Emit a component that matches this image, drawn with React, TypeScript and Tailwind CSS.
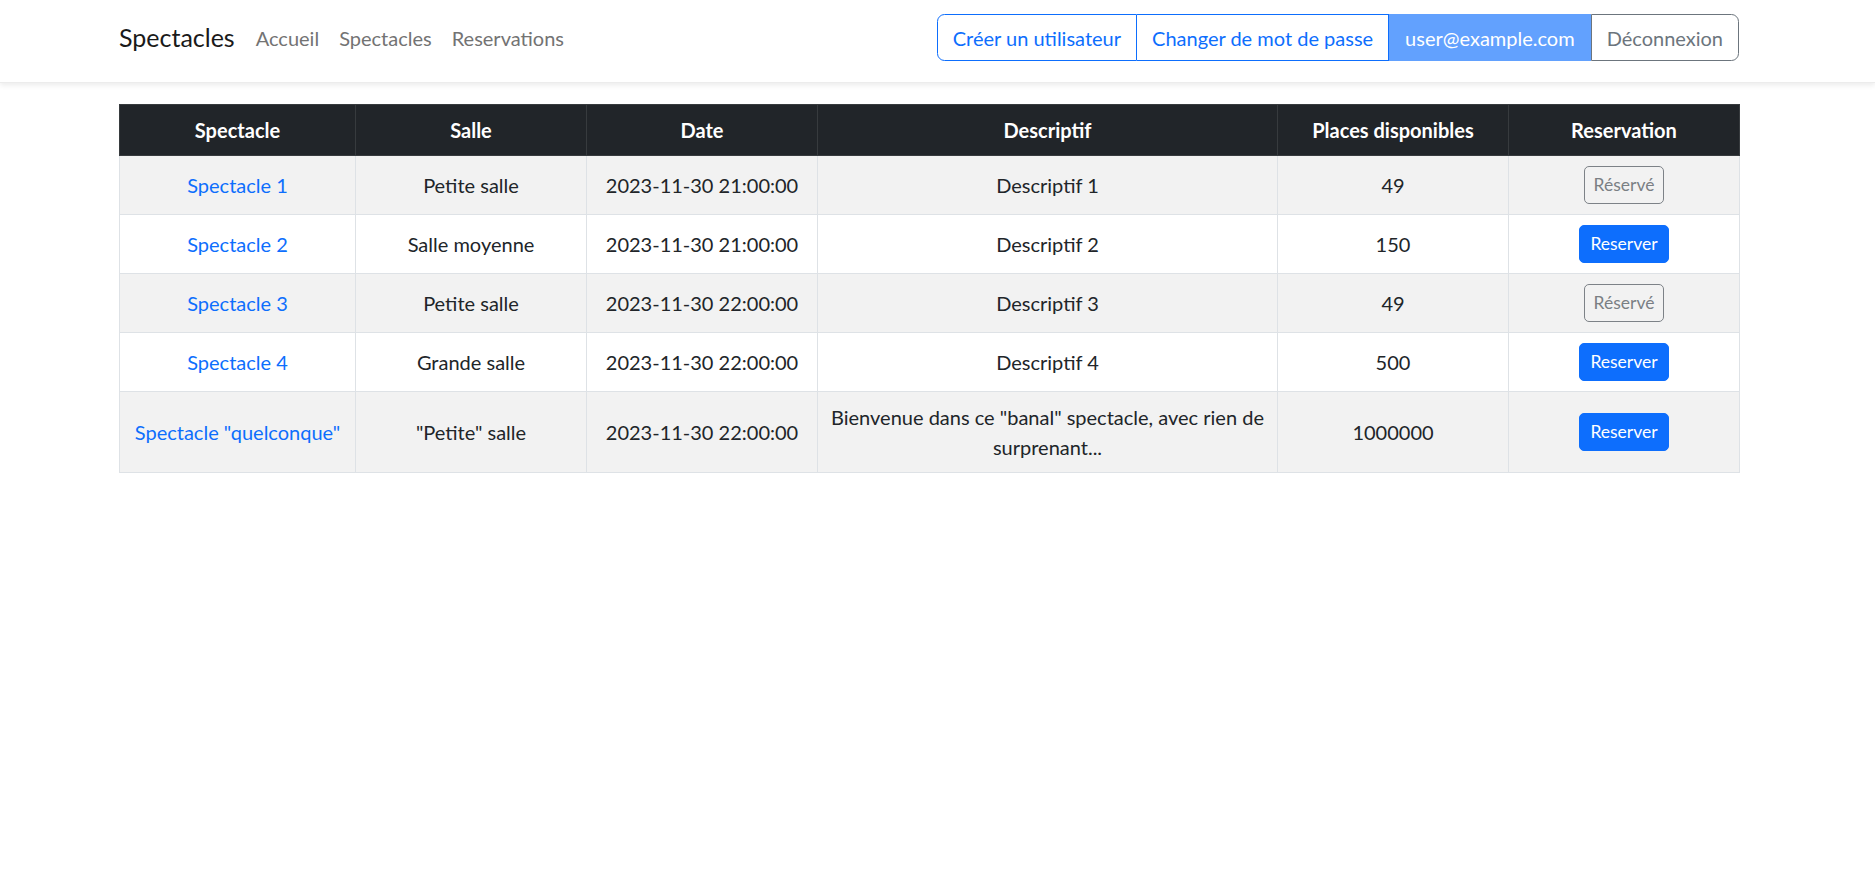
import React from "react";

const font = { fontFamily: 'Lato, "Open Sans", Arial, sans-serif' };

type Row = {
  name: string;
  salle: string;
  date: string;
  desc: React.ReactNode;
  places: string;
  reserved: boolean;
};

const rows: Row[] = [
  { name: "Spectacle 1", salle: "Petite salle", date: "2023-11-30 21:00:00", desc: "Descriptif 1", places: "49", reserved: true },
  { name: "Spectacle 2", salle: "Salle moyenne", date: "2023-11-30 21:00:00", desc: "Descriptif 2", places: "150", reserved: false },
  { name: "Spectacle 3", salle: "Petite salle", date: "2023-11-30 22:00:00", desc: "Descriptif 3", places: "49", reserved: true },
  { name: "Spectacle 4", salle: "Grande salle", date: "2023-11-30 22:00:00", desc: "Descriptif 4", places: "500", reserved: false },
  {
    name: 'Spectacle "quelconque"',
    salle: '"Petite" salle',
    date: "2023-11-30 22:00:00",
    desc: (
      <>
        <span className="whitespace-nowrap">Bienvenue dans ce "banal" spectacle, avec rien de</span>
        <br />
        surprenant...
      </>
    ),
    places: "1000000",
    reserved: false,
  },
];

export default function App() {
  return (
    <div className="min-h-[892px] bg-white text-[#212529]" style={font}>
      <nav className="h-[83px] bg-white shadow-[0_2.5px_5px_rgba(0,0,0,0.075)] border-b border-[#ececec]">
        <div className="ml-[119px] w-[1620px] flex items-center justify-between pt-[14px]">
          <div className="flex items-center h-[47px]">
            <span className="text-[25px] leading-[37px] text-[#1a1a1a] mr-[11px]">Spectacles</span>
            <span className="text-[20px] leading-[30px] text-[#737373] px-[10px]">Accueil</span>
            <span className="text-[20px] leading-[30px] text-[#737373] px-[10px]">Spectacles</span>
            <span className="text-[20px] leading-[30px] text-[#737373] px-[10px]">Reservations</span>
          </div>
          <div className="flex h-[47px] text-[20px] leading-[30px]">
            <button className="px-[15px] border border-[#0d6efd] text-[#0d6efd] rounded-l-[7.5px] bg-white">
              Créer un utilisateur
            </button>
            <button className="px-[15px] border border-l-0 border-[#0d6efd] text-[#0d6efd] bg-white">
              Changer de mot de passe
            </button>
            <button className="px-[15px] border border-[#62a1fe] bg-[#62a1fe] text-white">
              user@example.com
            </button>
            <button className="px-[15px] border border-[#6c757d] text-[#6c757d] rounded-r-[7.5px] bg-white">
              Déconnexion
            </button>
          </div>
        </div>
      </nav>

      <div className="ml-[119px] w-[1620px] mt-[21px]">
        <table className="w-full table-fixed border-collapse text-[20px] leading-[30px] text-center">
          <colgroup>
            <col className="w-[236px]" />
            <col className="w-[231px]" />
            <col className="w-[231px]" />
            <col className="w-[460px]" />
            <col className="w-[231px]" />
            <col className="w-[231px]" />
          </colgroup>
          <thead>
            <tr className="bg-[#212529] text-white font-bold">
              {["Spectacle", "Salle", "Date", "Descriptif", "Places disponibles", "Reservation"].map((h) => (
                <th key={h} className="border border-[#373b3e] py-[10px] px-[10px] font-bold">
                  {h}
                </th>
              ))}
            </tr>
          </thead>
          <tbody>
            {rows.map((r, i) => (
              <tr key={i} className={i % 2 === 0 ? "bg-[#f2f2f2]" : "bg-white"}>
                <td className="border border-[#dee2e6] py-[10px] px-[10px] align-middle whitespace-nowrap">
                  <a className="text-[#0d6efd]">{r.name}</a>
                </td>
                <td className="border border-[#dee2e6] py-[10px] px-[10px] align-middle">{r.salle}</td>
                <td className="border border-[#dee2e6] py-[10px] px-[10px] align-middle">{r.date}</td>
                <td className="border border-[#dee2e6] py-[10px] px-[10px] align-middle">{r.desc}</td>
                <td className="border border-[#dee2e6] py-[10px] px-[10px] align-middle">{r.places}</td>
                <td className="border border-[#dee2e6] py-[10px] px-[10px] align-middle">
                  {r.reserved ? (
                    <button className="h-[38px] px-[9px] text-[17.5px] leading-[26px] border border-[#7d8287] text-[#7a7f84] rounded-[5px] bg-transparent align-middle">
                      Réservé
                    </button>
                  ) : (
                    <button className="h-[38px] px-[10px] text-[17.5px] leading-[26px] border border-[#0d6efd] bg-[#0d6efd] text-white rounded-[5px] align-middle">
                      Reserver
                    </button>
                  )}
                </td>
              </tr>
            ))}
          </tbody>
        </table>
      </div>
    </div>
  );
}
